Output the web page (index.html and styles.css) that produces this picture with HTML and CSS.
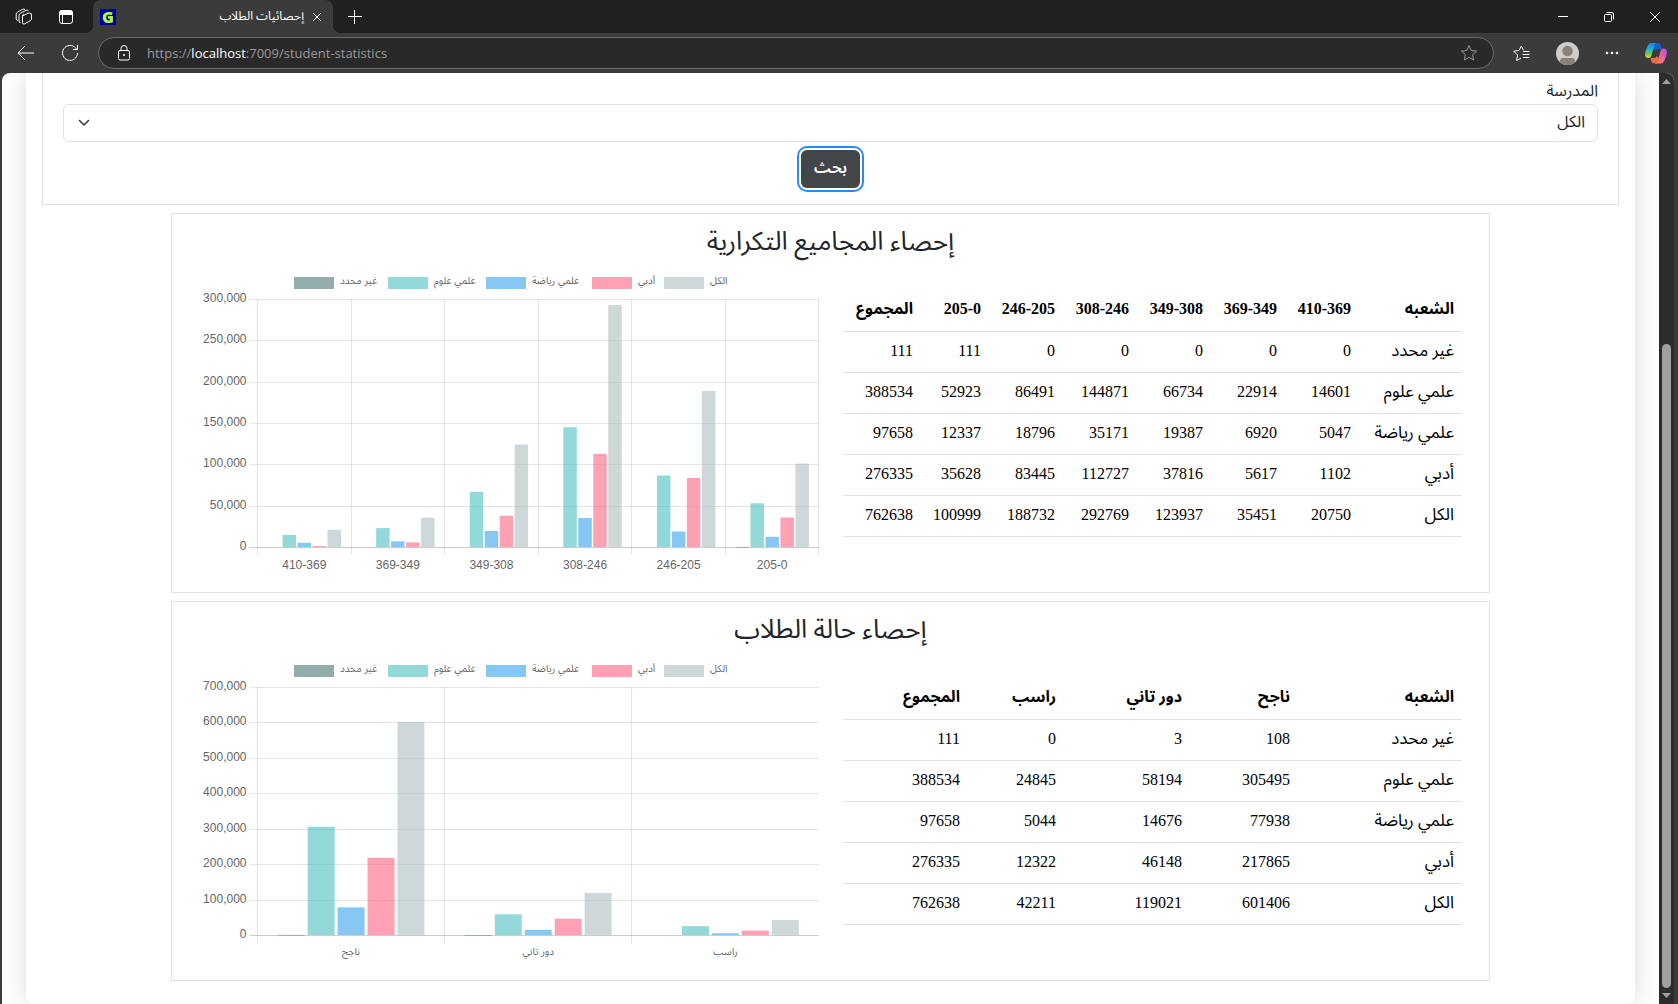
FILE: index.html
```html
<!DOCTYPE html>
<html lang="ar">
<head>
<meta charset="utf-8">
<meta name="viewport" content="width=device-width, initial-scale=1">
<title>إحصائيات الطلاب</title>
<link rel="stylesheet" href="styles.css">
</head>
<body>
<div class="browser">
  <header class="titlebar">
    <button class="icon-btn workspaces" aria-label="Workspaces">
      <svg width="18" height="18" viewBox="0 0 18 18" fill="none" stroke="#fff" stroke-width="1" stroke-linejoin="round"><path d="M7.5 8 13 5.2q1.6-.7 3.300 .5L16.500 11q0 1-1 1.600L9.800 15.800q-2.100 1-2.300-1zM7.500 8q.2-1.500 1.300-2.100M5.500 14.500Q4 14.800 4 13V7.500Q4 6 5.200 5.400L11 2.300q1.500-.6 2.500 .5M2.800 12.500Q1.200 12.200 1.200 11V6.200q0-1.300 1.200-2L7.500 1.300q1.500-.6 2.500 .2"/></svg>
    </button>
    <button class="icon-btn tab-actions" aria-label="Tab actions">
      <svg width="16" height="16" viewBox="0 0 16 16" fill="none" stroke="#fff"><rect x="1.500" y="1.500" width="13" height="13" rx="2.500"/><path d="M2 2h12v3.500H2z" fill="#fff"/><path d="M4.500 5.500v9"/></svg>
    </button>
    <div class="tab">
      <span class="favicon">G</span>
      <span class="tab-title" dir="rtl">إحصائيات الطلاب</span>
      <button class="icon-btn tab-close" aria-label="Close tab">
        <svg width="10" height="10" viewBox="0 0 10 10" stroke="#fff"><path d="m1 1 8 8M9 1 1 9"/></svg>
      </button>
    </div>
    <button class="icon-btn new-tab" aria-label="New tab">
      <svg width="14" height="14" viewBox="0 0 14 14" stroke="#fff"><path d="M0 6.500h14M6.500 0v14"/></svg>
    </button>
    <div class="window-controls">
      <button class="icon-btn" aria-label="Minimize"><svg width="10" height="10" viewBox="0 0 10 10" stroke="#fff"><path d="M0 4.500h10"/></svg></button>
      <button class="icon-btn" aria-label="Restore"><svg width="10" height="10" viewBox="0 0 10 10" fill="none" stroke="#fff"><rect x=".5" y="2.500" width="7" height="7" rx="1"/><path d="M2.500 .5H8q1.500 0 1.500 1.500v5.500"/></svg></button>
      <button class="icon-btn" aria-label="Close"><svg width="10" height="10" viewBox="0 0 10 10" stroke="#fff"><path d="m0 0 10 10M10 0 0 10"/></svg></button>
    </div>
  </header>

  <nav class="toolbar">
    <button class="icon-btn" aria-label="Back"><svg width="18" height="16" viewBox="0 0 18 16" fill="none" stroke="#fff"><path d="M17 8H1.500M8 1 1 8l7 7"/></svg></button>
    <button class="icon-btn" aria-label="Refresh"><svg width="18" height="18" viewBox="0 0 18 18" fill="none" stroke="#fff"><path d="M16.500 9A7.500 7.500 0 1 1 14.800 4.200L16 5.500M16.500 1v4.500H12"/></svg></button>
    <div class="address">
      <svg width="14" height="16" viewBox="0 0 14 16" fill="none" stroke="#fff"><rect x="1.500" y="5.500" width="11" height="9.500" rx="1.500"/><path d="M4 5.500V3.500a3 3 0 0 1 6 0v2"/><circle cx="7" cy="10" r=".6" fill="#fff"/></svg>
      <span class="url" dir="ltr">https://<b>localhost</b>:7009/student-statistics</span>
      <button class="icon-btn star" aria-label="Add to favorites"><svg width="18" height="18" viewBox="0 0 18 18" fill="none" stroke="#999" stroke-linejoin="round"><path d="m9 1.500 2.200 5 5.300.6-3.900 3.600 1 5.300L9 13.400 4.400 16l1-5.300L1.500 7.100l5.300-.6z"/></svg></button>
    </div>
    <div class="toolbar-end">
      <button class="icon-btn" aria-label="Favorites"><svg width="17" height="17" viewBox="0 0 17 17" fill="none" stroke="#fff" stroke-linejoin="round"><path d="M10.500 5.300 8.300 1 6 5.500l-5.300.7 3.900 3.900-1 5.400L8 13.200M10 6.500h6.500M9.500 9.500h7M10 12.500h6.500"/></svg></button>
      <button class="icon-btn" aria-label="Profile"><svg width="23" height="23" viewBox="0 0 23 23"><defs><clipPath id="avatar"><circle cx="11.500" cy="11.500" r="11.500"/></clipPath></defs><g clip-path="url(#avatar)"><path fill="#d1cfcc" d="M0 0h23v23H0z"/><circle cx="11.500" cy="9" r="5.300" fill="#85827f"/><path fill="#85827f" d="M4 23v-4q0-3 3-3h9q3 0 3 3v4z"/></g></svg></button>
      <button class="icon-btn" aria-label="More"><svg width="14" height="4" viewBox="0 0 14 4" fill="#fff"><circle cx="2" cy="2" r="1.300"/><circle cx="7" cy="2" r="1.300"/><circle cx="12" cy="2" r="1.300"/></svg></button>
      <button class="icon-btn" aria-label="Copilot">
        <svg width="22" height="21" viewBox="0 0 22 21">
          <defs>
            <linearGradient id="cop-a" x1="0" y1="0" x2="0" y2="1"><stop offset="0" stop-color="#1686f0"/><stop offset=".45" stop-color="#25b8c8"/><stop offset=".7" stop-color="#73c450"/><stop offset="1" stop-color="#f8d020"/></linearGradient>
            <linearGradient id="cop-b" x1="1" y1="0" x2="0" y2="1"><stop offset="0" stop-color="#9a55f5"/><stop offset=".5" stop-color="#f0609a"/><stop offset="1" stop-color="#ff8a40"/></linearGradient>
          </defs>
          <path fill="#1460d0" d="M9 0h4q2 0 2.800 2.200L17 6h-4q-2 0-2.700 2L8 4z"/>
          <path fill="#f26a3a" d="M12.500 20.500H9q-2 0-2.600-2L5.500 15h4q1.500 0 2-2l2 2z"/>
          <path fill="url(#cop-a)" d="M6 0h6q-2 0-2.700 2.300L6.300 13q-.7 2-2.600 2Q0 15 0 11.500 0 9 2.800 2.600 4 0 6 0z"/>
          <path fill="url(#cop-b)" d="M16 20.500h-6q2 0 2.700-2.300L15.700 7.500q.7-2 2.600-2Q22 5.500 22 9q0 2.500-2.800 8.900-1.200 2.600-3.200 2.600z"/>
        </svg>
      </button>
    </div>
  </nav>

  <div class="viewport">
    <main class="page" dir="rtl">
      <div class="card">
        <form class="filter">
          <label for="school">المدرسة</label>
          <div class="select-wrap">
            <select id="school"><option>الكل</option></select>
            <svg class="chevron" width="12" height="8" viewBox="0 0 12 8" fill="none" stroke="#343a40" stroke-width="1.600" stroke-linecap="round" stroke-linejoin="round"><path d="m1.500 1.500 4.500 4.500 4.500-4.500"/></svg>
          </div>
          <button class="search" type="button">بحث</button>
        </form>

        <section class="stats">
          <h3>إحصاء المجاميع التكرارية</h3>
          <div class="stats-row">
            <table>
              <colgroup><col class="w-branch"><col class="w-range"><col class="w-range"><col class="w-range"><col class="w-range"><col class="w-range"><col class="w-last-range"><col></colgroup>
              <thead><tr><th>الشعبه</th><th>410-369</th><th>369-349</th><th>349-308</th><th>308-246</th><th>246-205</th><th>205-0</th><th>المجموع</th></tr></thead>
              <tbody>
                <tr><td>غير محدد</td><td>0</td><td>0</td><td>0</td><td>0</td><td>0</td><td>111</td><td>111</td></tr>
                <tr><td>علمي علوم</td><td>14601</td><td>22914</td><td>66734</td><td>144871</td><td>86491</td><td>52923</td><td>388534</td></tr>
                <tr><td>علمي رياضة</td><td>5047</td><td>6920</td><td>19387</td><td>35171</td><td>18796</td><td>12337</td><td>97658</td></tr>
                <tr><td>أدبي</td><td>1102</td><td>5617</td><td>37816</td><td>112727</td><td>83445</td><td>35628</td><td>276335</td></tr>
                <tr><td>الكل</td><td>20750</td><td>35451</td><td>123937</td><td>292769</td><td>188732</td><td>100999</td><td>762638</td></tr>
              </tbody>
            </table>
            <div class="chart" data-max="300000" data-step="50000" data-closed="1"></div>
          </div>
        </section>

        <section class="stats">
          <h3>إحصاء حالة الطلاب</h3>
          <div class="stats-row">
            <table>
              <colgroup><col class="w-state"><col class="w-pass"><col class="w-second"><col class="w-fail"><col></colgroup>
              <thead><tr><th>الشعبه</th><th>ناجح</th><th>دور تاني</th><th>راسب</th><th>المجموع</th></tr></thead>
              <tbody>
                <tr><td>غير محدد</td><td>108</td><td>3</td><td>0</td><td>111</td></tr>
                <tr><td>علمي علوم</td><td>305495</td><td>58194</td><td>24845</td><td>388534</td></tr>
                <tr><td>علمي رياضة</td><td>77938</td><td>14676</td><td>5044</td><td>97658</td></tr>
                <tr><td>أدبي</td><td>217865</td><td>46148</td><td>12322</td><td>276335</td></tr>
                <tr><td>الكل</td><td>601406</td><td>119021</td><td>42211</td><td>762638</td></tr>
              </tbody>
            </table>
            <div class="chart" data-max="700000" data-step="100000"></div>
          </div>
        </section>
      </div>
    </main>
    <div class="scrollbar" aria-hidden="true">
      <svg width="9" height="5" viewBox="0 0 9 5"><path fill="#a0a0a0" d="M4.500 0 9 5H0z"/></svg>
      <div class="track"><div class="thumb"></div></div>
      <svg width="9" height="5" viewBox="0 0 9 5"><path fill="#a0a0a0" d="M4.500 5 9 0H0z"/></svg>
    </div>
  </div>
</div>
<script src="charts.js"></script>
</body>
</html>
```

FILE: styles.css
```css
* { box-sizing: border-box; }

body {
  margin: 0;
  font-family: "Liberation Serif", "Noto Sans Arabic", "DejaVu Sans", serif;
  font-size: 16px;
  line-height: 24px;
  color: #212529;
  background: #3b3b3b;
}

.browser {
  display: flex;
  flex-direction: column;
  height: 100vh;
  overflow: hidden;
}

.icon-btn {
  display: inline-flex;
  align-items: center;
  justify-content: center;
  padding: 0;
  border: 0;
  background: none;
}

/* Browser chrome */
.titlebar {
  display: flex;
  flex: none;
  align-items: center;
  height: 33px;
  background: #202020;
}
.workspaces { width: 18px; margin-left: 15px; }
.tab-actions { width: 16px; margin-left: 25px; }
.tab {
  position: relative;
  display: flex;
  align-items: center;
  gap: 8px;
  width: 240px;
  height: 33px;
  margin-left: 19px;
  padding: 0 11px 0 7px;
  border-radius: 8px 8px 0 0;
  background: #3b3b3b;
}
.tab::before,
.tab::after {
  content: "";
  position: absolute;
  bottom: 0;
  width: 8px;
  height: 8px;
}
.tab::before { left: -8px; background: radial-gradient(circle at 0 0, #202020 8px, #3b3b3b 8px); }
.tab::after { right: -8px; background: radial-gradient(circle at 100% 0, #202020 8px, #3b3b3b 8px); }
.favicon {
  width: 16px;
  height: 16px;
  background: #0000a8;
  color: #adff2f;
  font: 800 16px/16px "Open Sans", sans-serif;
  text-align: center;
}
.tab-title {
  flex: 1;
  color: #fff;
  font: 12px/16px "Noto Sans Arabic", "DejaVu Sans", sans-serif;
}
.new-tab { width: 14px; margin-left: 15px; }
.window-controls { display: flex; margin-left: auto; }
.window-controls .icon-btn { width: 46px; height: 33px; }

.toolbar {
  display: flex;
  flex: none;
  align-items: center;
  height: 40px;
  padding: 0 11px 0 17px;
  background: #3b3b3b;
}
.toolbar > .icon-btn { width: 18px; margin-right: 26px; }
.toolbar > .icon-btn + .icon-btn { margin-right: 19px; }
.address {
  display: flex;
  flex: 1;
  align-items: center;
  gap: 16px;
  height: 32px;
  padding: 0 15px 0 18px;
  border: 1px solid #6b6b6b;
  border-radius: 16px;
  background: #292929;
}
.url {
  flex: 1;
  color: #9a9a9a;
  font: 13px/18px "Open Sans", "Noto Sans", sans-serif;
}
.url b { color: #fff; font-weight: 400; }
.toolbar-end {
  display: flex;
  align-items: center;
  gap: 26px;
  margin-left: 19px;
}

/* Page area */
.viewport {
  display: flex;
  flex: 1;
  min-height: 0;
  margin: 0 4px 0 2px;
  border-radius: 8px 8px 0 0;
  background: #fff;
  overflow: hidden;
}
.page {
  flex: 1;
  min-width: 0;
  padding: 0 24px;
}
.card {
  display: flex;
  flex-direction: column;
  gap: 8px;
  min-height: 100%;
  padding: 0 16px 23px;
  border-radius: 0 0 8px 8px;
  box-shadow: 0 0 24px rgba(0, 0, 0, 0.15);
}
.scrollbar {
  display: flex;
  flex: none;
  flex-direction: column;
  align-items: center;
  gap: 5px;
  width: 15px;
  padding: 6px 0;
  background: #2c2c2c;
}
.track { flex: 1; width: 9px; padding-top: 255px; }
.thumb { height: 100%; border-radius: 5px; background: #a0a0a0; }

/* Filter */
.filter {
  display: flex;
  flex-direction: column;
  padding: 6px 20px 16px;
  border: 1px solid #dee2e6;
  border-top: 0;
}
.filter label { margin-bottom: 1px; }
.select-wrap { display: grid; align-items: center; margin-bottom: 8px; }
.select-wrap > * { grid-area: 1 / 1; }
.select-wrap select {
  appearance: none;
  width: 100%;
  height: 38px;
  padding: 0 12px 2px;
  border: 1px solid #dee2e6;
  border-radius: 6px;
  background: #fff;
  color: #212529;
  font: inherit;
}
.chevron { justify-self: end; margin-left: 15px; pointer-events: none; }
.search {
  align-self: center;
  width: 59px;
  height: 38px;
  padding: 0 0 2px;
  border: 0;
  border-radius: 6px;
  background: #424649;
  box-shadow: 0 0 0 2px #fff, 0 0 0 4px #258cfb;
  color: #fff;
  font: inherit;
  font-weight: 600;
}

/* Statistics */
.stats {
  width: 100%;
  max-width: 1319px;
  margin: 0 auto;
  padding: 8px 27px 15px;
  border: 1px solid #dee2e6;
}
.stats h3 {
  margin: 0 0 5px;
  font-size: 26px;
  font-weight: 400;
  line-height: 40px;
  text-align: center;
}
.stats-row {
  display: grid;
  grid-template-columns: 1fr 1fr;
  gap: 24px;
  align-items: start;
}
table {
  width: 100%;
  margin-top: 23px;
  border-collapse: collapse;
  table-layout: fixed;
  color: #000;
}
th, td {
  height: 41px;
  padding: 0 8px 2px;
  border-bottom: 1px solid #dee2e6;
  text-align: right;
  white-space: nowrap;
}
td:first-child { font-size: 17px; }
.w-branch { width: 103px; }
.w-range { width: 74px; }
.w-last-range { width: 68px; }
.w-state { width: 164px; }
.w-pass { width: 108px; }
.w-second { width: 126px; }
.w-fail { width: 96px; }

.chart { direction: ltr; height: 310px; }
.chart svg { display: block; width: 100%; height: 310px; }
.chart text {
  fill: #666;
  font: 12px "Liberation Sans", "Noto Sans Arabic", "DejaVu Sans", sans-serif;
}
.chart .small { font-size: 10px; }
```

FILE: charts.js
```js
const colors = [
  "rgba(75,118,118,.6)",
  "rgba(75,192,192,.6)",
  "rgba(54,162,235,.6)",
  "rgba(255,99,132,.6)",
  "rgba(175,190,190,.6)"
];
const NS = "http://www.w3.org/2000/svg";

function add(parent, name, attrs, text) {
  const el = document.createElementNS(NS, name);
  for (const key in attrs) el.setAttribute(key, attrs[key]);
  if (text) el.textContent = text;
  parent.appendChild(el);
  return el;
}

document.querySelectorAll(".chart").forEach((box) => {
  // The chart is drawn from the table beside it.
  const table = box.previousElementSibling;
  const labels = [...table.querySelectorAll("th")].slice(1, -1).map((c) => c.textContent);
  const rows = [...table.querySelectorAll("tbody tr")].map((r) => [...r.cells].map((c) => c.textContent));
  const max = +box.dataset.max;
  const step = +box.dataset.step;
  const width = box.clientWidth;
  const svg = add(box, "svg", { role: "img" });
  const left = 58.5, top = 32, bottom = 280, plot = width - left;
  const line = (x1, y1, x2, y2, stroke) => add(svg, "path", { d: `M${x1} ${y1}L${x2} ${y2}`, stroke });
  const y = (v) => bottom - (v / max) * (bottom - top);

  // Legend: swatch, 6px, name, 10px
  const names = [38, 42, 50, 16, 16];
  let x = Math.round((width - 431) / 2);
  rows.forEach((row, i) => {
    add(svg, "rect", { x, y: 10, width: 40, height: 12, fill: colors[i] });
    add(svg, "text", { x: x + 46, y: 17, class: "small" }, row[0]);
    x += 56 + names[i];
  });

  for (let v = 0; v <= max; v += step) {
    const gy = Math.round(y(v)) + 0.5;
    line(left - 8, gy, width, gy, v ? "rgba(0,0,0,.1)" : "rgba(0,0,0,.2)");
    add(svg, "text", { x: left - 11, y: gy + 2.5, "text-anchor": "end" }, v.toLocaleString("en-US"));
  }
  const slot = plot / labels.length;
  const edges = box.dataset.closed ? labels.length : labels.length - 1;
  for (let i = 0; i <= edges; i++) {
    const gx = Math.min(Math.floor(left + slot * i), width - 1) + 0.5;
    line(gx, top, gx, bottom + 8, "rgba(0,0,0,.1)");
  }

  const bar = (slot * 0.8) / rows.length;
  labels.forEach((label, i) => {
    rows.forEach((row, j) => {
      const v = +row[i + 1];
      if (!v) return;
      const bx = left + slot * (i + 0.1) + bar * (j + 0.05);
      add(svg, "rect", { x: bx, y: y(v), width: bar * 0.9, height: Math.max(bottom - y(v), 0.6), fill: colors[j] });
    });
    const arabic = /[\u0600-\u06ff]/.test(label);
    add(svg, "text", { x: left + slot * (i + 0.5), y: arabic ? 300 : 302, "text-anchor": "middle", class: arabic ? "small" : "" }, label);
  });
});
```
